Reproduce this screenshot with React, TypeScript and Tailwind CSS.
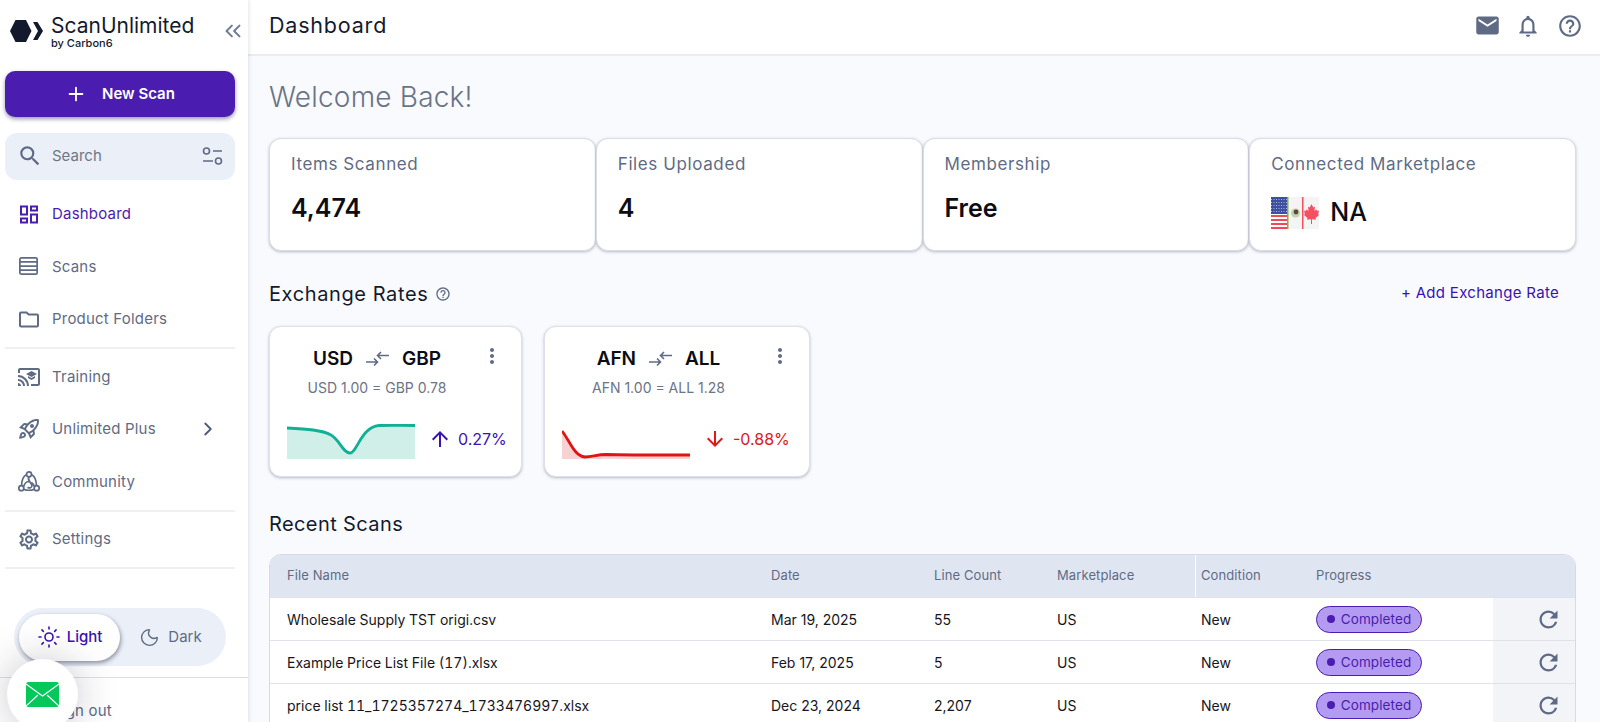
import React from 'react';
import { Plus, ChevronsLeft, ChevronRight, Moon, Sun } from 'lucide-react';
import {
  MdEmail,
  MdOutlineCastForEducation,
  MdOutlineDashboard,
  MdOutlineFolder,
  MdOutlineHelpOutline,
  MdOutlineNotifications,
  MdOutlineRocketLaunch,
  MdOutlineSettings,
  MdRefresh,
  MdSearch,
  MdMoreVert,
  MdArrowUpward,
  MdArrowDownward,
} from 'react-icons/md';

const font = "font-['Inter','Noto_Sans',sans-serif]";

const stats = [
  { label: 'Items Scanned', value: '4,474' },
  { label: 'Files Uploaded', value: '4' },
  { label: 'Membership', value: 'Free' },
];

const rows = [
  { name: 'Wholesale Supply TST origi.csv', date: 'Mar 19, 2025', lines: '55' },
  { name: 'Example Price List File (17).xlsx', date: 'Feb 17, 2025', lines: '5' },
  { name: 'price list 11_1725357274_1733476997.xlsx', date: 'Dec 23, 2024', lines: '2,207' },
];

const gridCols = 'grid grid-cols-[484px_163px_123px_155px_104px_194px_1fr]';

const NavItem = ({ icon, label, active, right, tall }: { icon: React.ReactNode; label: string; active?: boolean; right?: React.ReactNode; tall?: boolean }) => (
  <div className={`flex items-center pl-[17px] pr-[21px] ${tall ? 'h-[55px]' : 'h-[52.5px]'} ${active ? 'text-[#4a1db0]' : 'text-[#5f6b85]'}`}>
    <span className="flex w-[24px] justify-center">{icon}</span>
    <span className="ml-[11px] flex-1 text-[15px] tracking-[0.2px]">{label}</span>
    {right}
  </div>
);

const Divider = () => <div className="mx-[5px] h-[2px] bg-[#eef0f3]" />;

const Logo = () => (
  <svg width="34" height="24" viewBox="0 0 34 24" className="mt-[4px] shrink-0">
    <polygon points="0,12 5.500,1 16,1 21.500,12 16,23 5.500,23" fill="#141a2e" />
    <polygon points="23,3 27.500,3 33,12 27.500,21 23,21 28,12" fill="#141a2e" />
  </svg>
);

const ScansIcon = () => (
  <svg width="25" height="25" viewBox="0 0 25 25" fill="none" stroke="#5f6b85" strokeWidth="1.800">
    <rect x="3" y="3.500" width="18" height="17" rx="1.500" />
    <path d="M3 7.800h18M3 12h18M3 16.200h18" />
  </svg>
);

const CommunityIcon = () => (
  <svg width="25" height="25" viewBox="0 0 25 25" fill="none" stroke="#5f6b85" strokeWidth="1.800">
    <circle cx="12.500" cy="5" r="2.600" />
    <circle cx="4.500" cy="19.500" r="2.600" />
    <circle cx="20.500" cy="19.500" r="2.600" />
    <path d="M9.800 5.500C6.500 7 5 10 4.700 16.800M15.200 5.500C18.500 7 20 10 20.300 16.800M7.200 20.500C10 22 15 22 17.800 20.500" />
    <path d="M12.500 7.700C10 12 15 13 15.500 16.500C15.800 19 13 20 11 18.500M7 17.800C8 14 10.500 12.500 12.500 12.500M18 17.800C17.500 15.500 16.500 14.500 15 13.500" />
  </svg>
);

const SwapIcon = () => (
  <svg width="23" height="16" viewBox="0 0 23 16" fill="none" stroke="#5f6b85" strokeWidth="1.600">
    <path d="M0 11h11M8 7.500l3.500 3.500L8 14.500" />
    <path d="M23 4.500H12M15 1l-3.500 3.500L15 8" />
  </svg>
);

const Flags = () => (
  <svg width="48" height="32" viewBox="0 0 48 32" className="shrink-0">
    <rect width="48" height="32" fill="#f4f4f4" />
    <rect width="16" height="32" fill="#fff" />
    <rect width="16" height="17" fill="#3f4fa0" />
    <path d="M0 2.500h16M0 5.500h16M0 8.500h16M0 11.500h16M0 14.500h16" stroke="#aab2dc" strokeWidth="1" strokeDasharray="1 1.500" />
    <path d="M0 19h16M0 23h16M0 27h16M0 31h16" stroke="#ef4a57" strokeWidth="2" />
    <rect x="16" width="1.500" height="32" fill="#7fb13c" />
    <circle cx="24.500" cy="16" r="4.500" fill="#b9d6ae" />
    <circle cx="25" cy="15" r="2.400" fill="#6b3f3a" />
    <rect x="31" width="1.500" height="32" fill="#f4505f" />
    <polygon points="40.500,7 42.300,10.500 44,9.700 43.400,14 45.400,12.200 46,14 48,13.600 47.200,17 48,18 44.500,21 45,22.800 41,22.300 41,27 40,27 40,22.300 36,22.800 36.500,21 33,18 33.800,17 33,13.600 35,14 35.600,12.200 37.600,14 37,9.700 38.700,10.500" fill="#f4505f" />
  </svg>
);

const ExchangeCard = ({
  from,
  to,
  rate,
  change,
  up,
  width,
  line,
  area,
}: {
  from: string;
  to: string;
  rate: string;
  change: string;
  up: boolean;
  width: string;
  line: string;
  area: string;
}) => (
  <div className={`relative h-[151px] rounded-xl border border-[#dfe1e8] bg-white shadow-[0_1px_3px_rgba(60,65,90,0.35)] ${width}`}>
    <MdMoreVert className="absolute right-[17px] top-[17px] text-[#5f6b85]" size={24} />
    <div className="flex flex-col items-center pr-[37px]">
      <div className="mt-[20px] flex items-center gap-[13px] text-[19px] font-semibold leading-[24px] text-[#0c0c14]">
        <span>{from}</span>
        <SwapIcon />
        <span>{to}</span>
      </div>
      <div className="mt-[8px] text-[14px] leading-[18px] text-[#6b7488]">{rate}</div>
    </div>
    <div className="absolute bottom-[17px] left-[17px] right-0 flex items-center">
      <svg width="128" height="36" viewBox="0 0 128 36" className="shrink-0">
        <path d={area} fill={up ? '#cfefe8' : '#f7d2d2'} />
        <path d={line} fill="none" stroke={up ? '#0fb093' : '#dd1515'} strokeWidth="2.800" />
      </svg>
      <div className={`mb-[5px] ml-[13px] flex items-center gap-[6px] text-[16px] ${up ? 'text-[#3a12b4]' : 'text-[#e01818]'}`}>
        {up ? <MdArrowUpward size={24} /> : <MdArrowDownward size={24} />}
        <span>{change}</span>
      </div>
    </div>
  </div>
);

export default function App() {
  return (
    <div className={`relative flex h-[722px] w-[1600px] overflow-hidden bg-[#f9fafe] ${font}`}>
      <aside className="relative z-10 flex w-[248px] shrink-0 flex-col bg-white shadow-[1px_0_4px_rgba(30,40,70,0.12)]">
        <div className="w-[240px]">
          <div className="flex h-[71px] items-start pl-[10px] pt-[15px]">
            <Logo />
            <div className="ml-[7px] flex-1 leading-none">
              <div className="text-[21px] leading-[22px] text-[#141a2e]">ScanUnlimited</div>
              <div className="text-[11px] font-medium leading-[13px] text-[#141a2e]">by Carbon6</div>
            </div>
            <ChevronsLeft size={26} strokeWidth={1.800} className="mr-[-6px] mt-[3px] text-[#6d7a99]" />
          </div>
          <button className="mx-[5px] flex h-[46px] w-[230px] items-center justify-center gap-[15px] rounded-[10px] bg-[#4a1db0] text-[15px] font-semibold text-white shadow-[0_2px_4px_rgba(30,20,80,0.45)]">
            <Plus size={22} strokeWidth={2} />
            New Scan
          </button>
          <div className="mx-[5px] mt-[16px] flex h-[47px] items-center rounded-[12px] bg-[#eaeff8] pb-[1px] pl-[12px] pr-[11px] text-[#5f6b85]">
            <MdSearch size={26} />
            <span className="ml-[9px] flex-1 text-[15px] text-[#6f7785]">Search</span>
            <svg width="22" height="18" viewBox="0 0 22 18" fill="none" stroke="#5f6b85" strokeWidth="1.600">
              <circle cx="4.500" cy="4" r="3" />
              <path d="M11 4h9M1 14h10" />
              <circle cx="16.500" cy="14" r="3" />
            </svg>
          </div>
          <div className="mt-[8px]">
            <NavItem active label="Dashboard" icon={<MdOutlineDashboard size={25} />} />
            <NavItem label="Scans" icon={<ScansIcon />} />
            <NavItem label="Product Folders" icon={<MdOutlineFolder size={25} />} />
          </div>
          <div className="mt-[1px]" />
          <Divider />
          <div className="mt-[2px]">
            <NavItem label="Training" icon={<MdOutlineCastForEducation size={24} />} />
            <NavItem label="Unlimited Plus" icon={<MdOutlineRocketLaunch size={24} />} right={<ChevronRight size={22} strokeWidth={2} className="text-[#4d5a78]" />} />
            <NavItem label="Community" icon={<CommunityIcon />} />
          </div>
          <div className="mt-[2px]" />
          <Divider />
          <NavItem tall label="Settings" icon={<MdOutlineSettings size={25} />} />
          <Divider />
          <div className="mx-[14px] mt-[39px] flex h-[58px] items-center rounded-full bg-[#eaeff8] px-[5px]">
            <div className="flex h-[47px] w-[101px] items-center justify-center gap-[6px] rounded-full bg-white text-[15px] font-medium text-[#3a12b4] shadow-[1px_2px_4px_rgba(30,30,50,0.45)]">
              <Sun size={24} strokeWidth={1.600} />
              Light
            </div>
            <div className="flex flex-1 items-center justify-center gap-[8px] text-[15px] text-[#5f6b85]">
              <Moon size={21} strokeWidth={1.600} />
              Dark
            </div>
          </div>
        </div>
        <div className="mt-[11px] h-px bg-[#dcdfe5]" />
        <div className="pl-[52px] pt-[24px] text-[15px] leading-[18px] tracking-[0.2px] text-[#5f6b85]">Sign out</div>
      </aside>

      <main className="flex min-w-0 flex-1 flex-col">
        <header className="flex h-[56px] shrink-0 items-center border-b-2 border-[#eaecf1] bg-white pb-[3px] pl-[21px] pr-[17px]">
          <h1 className="flex-1 text-[21.500px] font-normal tracking-[0.8px] text-[#141a2e]">Dashboard</h1>
          <MdEmail size={27} className="text-[#5f6b85]" />
          <MdOutlineNotifications size={26} className="ml-[14px] text-[#5f6b85]" />
          <MdOutlineHelpOutline size={26} className="ml-[16px] text-[#5f6b85]" />
        </header>

        <div className="pl-[21px] pr-[24px]">
          <h2 className="mt-[23px] text-[28px] font-light leading-[36px] tracking-[0.2px] text-[#6a7488]">Welcome Back!</h2>

          <div className="mt-[23px] grid h-[113px] grid-cols-4">
            {stats.map((s) => (
              <div key={s.label} className="rounded-xl border border-[#dadce6] bg-white pl-[21px] pt-[14px] shadow-[0_1px_3px_rgba(60,65,90,0.35)]">
                <div className="text-[17px] leading-[22px] tracking-[0.6px] text-[#5f6b85]">{s.label}</div>
                <div className="mt-[18px] text-[25px] font-semibold leading-[30px] text-[#0c0c14]">{s.value}</div>
              </div>
            ))}
            <div className="rounded-xl border border-[#dadce6] bg-white pl-[21px] pt-[14px] shadow-[0_1px_3px_rgba(60,65,90,0.35)]">
              <div className="text-[17px] leading-[22px] tracking-[0.6px] text-[#5f6b85]">Connected Marketplace</div>
              <div className="mt-[19px] flex items-center gap-[11px]">
                <Flags />
                <span className="text-[25px] font-medium text-[#0c0c14]">NA</span>
              </div>
            </div>
          </div>

          <div className="mt-[29px] flex h-[28px] items-center">
            <span className="text-[20px] font-normal tracking-[0.6px] text-[#141a2e]">Exchange Rates</span>
            <MdOutlineHelpOutline size={16} className="ml-[7px] text-[#5f6b85]" />
            <span className="mb-[2px] ml-auto mr-[17px] text-[15px] font-normal tracking-[0.3px] text-[#3a12b4]">+ Add Exchange Rate</span>
          </div>

          <div className="mt-[18px] flex gap-[22px]">
            <ExchangeCard
              from="USD"
              to="GBP"
              rate="USD 1.00 = GBP 0.78"
              change="0.27%"
              up
              width="w-[253px]"
              line="M0 5C20 6 35 7 44 12C52 16 56 30 63 30C70 30 74 4 92 2.500C105 2 115 2.500 128 2.500"
              area="M0 5C20 6 35 7 44 12C52 16 56 30 63 30C70 30 74 4 92 2.500C105 2 115 2.500 128 2.500V36H0Z"
            />
            <ExchangeCard
              from="AFN"
              to="ALL"
              rate="AFN 1.00 = ALL 1.28"
              change="-0.88%"
              up={false}
              width="w-[266px]"
              line="M0 8C8 18 12 33 23 34C30 34 35 31.500 44 31.500C60 32 100 32 128 32"
              area="M0 8C8 18 12 33 23 34C30 34 35 31.500 44 31.500C60 32 100 32 128 32V36H0Z"
            />
          </div>

          <h3 className="mt-[33px] h-[28px] text-[20px] font-normal leading-[28px] tracking-[0.4px] text-[#141a2e]">Recent Scans</h3>

          <div className="mt-[16px] overflow-hidden rounded-t-xl border border-[#d5dae6] bg-white">
            <div className={`${gridCols} h-[42px] items-stretch bg-[#dfe6f2] text-[13px] tracking-[0.1px] text-[#5f6b85]`}>
              <div className="flex items-center pl-[17px]">File Name</div>
              <div className="flex items-center pl-[17px]">Date</div>
              <div className="flex items-center pl-[17px]">Line Count</div>
              <div className="flex items-center pl-[17px]">Marketplace</div>
              <div className="flex items-center border-l border-white pl-[5px]">Condition</div>
              <div className="flex items-center pl-[17px]">Progress</div>
              <div />
            </div>
            {rows.map((r) => (
              <div key={r.name} className={`${gridCols} h-[43px] items-stretch border-t border-[#dfe2e8] text-[14px] text-[#16161e]`}>
                <div className="flex items-center pl-[17px] tabular-nums">{r.name}</div>
                <div className="flex items-center pl-[17px]">{r.date}</div>
                <div className="flex items-center pl-[17px]">{r.lines}</div>
                <div className="flex items-center pl-[17px]">US</div>
                <div className="flex items-center pl-[6px]">New</div>
                <div className="flex items-center pl-[17px]">
                  <span className="flex h-[27px] w-[106px] items-center justify-center gap-[6px] rounded-full border border-[#4a1db0] bg-[#b49bf2] text-[13.500px] tracking-[0.1px] text-[#4a1db0]">
                    <span className="h-[8px] w-[8px] rounded-full bg-[#4a1db0]" />
                    Completed
                  </span>
                </div>
                <div className="flex items-center justify-end bg-[#f2f4f8] pr-[13px]">
                  <MdRefresh size={27} className="text-[#5f6b85]" />
                </div>
              </div>
            ))}
          </div>
        </div>
      </main>

      <div className="absolute left-[7px] top-[659px] z-20 flex h-[71px] w-[71px] items-center justify-center rounded-full bg-white shadow-[0_0_40px_rgba(30,30,50,0.25)]">
        <svg width="33" height="25" viewBox="0 0 33 25">
          <rect width="33" height="25" rx="2.500" fill="#05c85a" />
          <path d="M0 2l16.500 12L33 2M0 24l12-11M33 24L21 13" fill="none" stroke="#fff" strokeWidth="1.200" />
        </svg>
      </div>
    </div>
  );
}
